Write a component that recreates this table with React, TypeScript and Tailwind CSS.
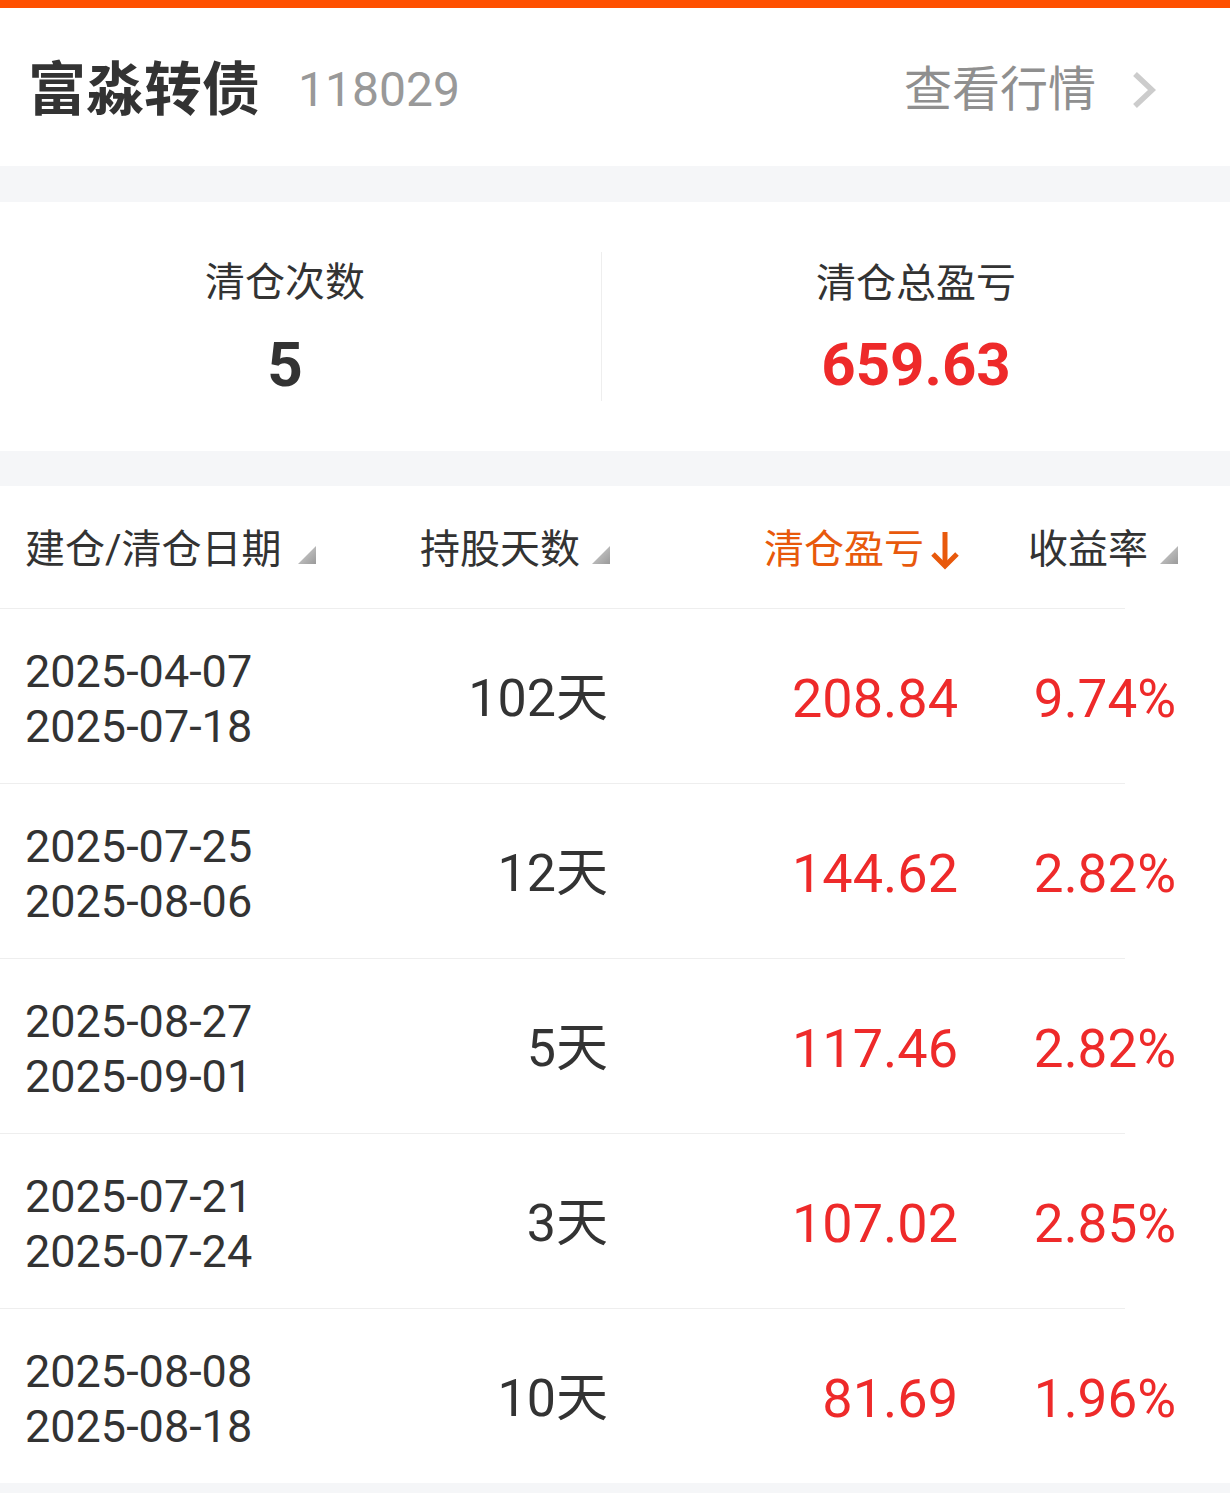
import React from "react";

const FONT = { fontFamily: 'Roboto, "Noto Sans CJK SC", sans-serif' };

function Tri() {
  return (
    <svg width="18" height="18" viewBox="0 0 18 18" className="shrink-0">
      <defs>
        <linearGradient id="tg" x1="0" y1="0" x2="1" y2="1">
          <stop offset="0" stopColor="#d6d6d6" />
          <stop offset="1" stopColor="#9a9a9a" />
        </linearGradient>
      </defs>
      <polygon points="18,0 18,18 0,18" fill="url(#tg)" />
    </svg>
  );
}

function DownArrow() {
  return (
    <svg width="30" height="40" viewBox="0 0 30 40" className="shrink-0">
      <path d="M15 2 V36" stroke="#e8590c" strokeWidth="5" fill="none" />
      <path d="M3 24 L15 36 L27 24" stroke="#e8590c" strokeWidth="5" fill="none" strokeLinejoin="miter" />
    </svg>
  );
}

const rows = [
  { a: "2025-04-07", b: "2025-07-18", d: "102天", p: "208.84", r: "9.74%" },
  { a: "2025-07-25", b: "2025-08-06", d: "12天", p: "144.62", r: "2.82%" },
  { a: "2025-08-27", b: "2025-09-01", d: "5天", p: "117.46", r: "2.82%" },
  { a: "2025-07-21", b: "2025-07-24", d: "3天", p: "107.02", r: "2.85%" },
  { a: "2025-08-08", b: "2025-08-18", d: "10天", p: "81.69", r: "1.96%" },
];

export default function App() {
  return (
    <div className="w-[1230px] h-[1494px] bg-white overflow-hidden" style={FONT}>
      <div className="h-[8px] bg-[#ff5000]" />
      {/* header */}
      <div className="h-[158px] flex items-center pl-[28px] pr-[72px] pt-[6px]">
        <div className="text-[58px] font-bold text-[#333333] leading-none">富淼转债</div>
        <div className="ml-[38px] text-[48px] text-[#999999] leading-none">118029</div>
        <div className="ml-auto flex items-center">
          <span className="text-[48px] text-[#8f8f8f] leading-none">查看行情</span>
          <svg width="28" height="40" viewBox="0 0 28 40" className="ml-[34px]">
            <path d="M5 4 L22 20 L5 36" stroke="#cccccc" strokeWidth="5.5" fill="none" />
          </svg>
        </div>
      </div>
      <div className="h-[36px] bg-[#f5f6f8]" />
      {/* stats */}
      <div className="h-[249px] flex items-center">
        <div className="w-[570px] flex flex-col items-center pt-[6px]">
          <div className="text-[40px] text-[#333333] leading-none">清仓次数</div>
          <div className="mt-[31px] text-[62px] font-bold text-[#333333] leading-none">5</div>
        </div>
        <div className="ml-[31px] w-px h-[149px] bg-[#eeeeee]" />
        <div className="flex-1 flex flex-col items-center pt-[6px]">
          <div className="text-[40px] text-[#333333] leading-none">清仓总盈亏</div>
          <div className="mt-[31px] text-[60px] font-bold text-[#ee2a2a] leading-none">659.63</div>
        </div>
      </div>
      <div className="h-[35px] bg-[#f5f6f8]" />
      {/* table header */}
      <div className="h-[122px] flex items-center pt-[6px] text-[40px] text-[#333333] leading-none">
        <div className="w-[360px] pl-[25px] flex items-end gap-[16px]">
          <span>建仓/清仓日期</span>
          <span className="mb-[6px]"><Tri /></span>
        </div>
        <div className="w-[250px] flex items-end justify-end gap-[12px]">
          <span>持股天数</span>
          <span className="mb-[6px]"><Tri /></span>
        </div>
        <div className="w-[350px] flex items-center justify-end gap-[6px] text-[#e8590c]">
          <span>清仓盈亏</span>
          <DownArrow />
        </div>
        <div className="w-[218px] flex items-end justify-end gap-[12px]">
          <span>收益率</span>
          <span className="mb-[6px]"><Tri /></span>
        </div>
      </div>
      {rows.map((row, i) => (
        <div key={i}>
          <div className="w-[1125px] h-px bg-[#eeeeee]" />
          <div className="h-[174px] flex items-center pt-[6px] leading-none">
            <div className="w-[360px] pl-[25px] flex flex-col gap-[10px] text-[45px] text-[#333333]">
              <span>{row.a}</span>
              <span>{row.b}</span>
            </div>
            <div className="w-[248px] text-right text-[52px] text-[#333333]">{row.d}</div>
            <div className="w-[350px] text-right text-[54px] text-[#ee2a2a]">{row.p}</div>
            <div className="w-[218px] text-right text-[53px] text-[#ee2a2a]">{row.r}</div>
          </div>
        </div>
      ))}
      <div className="h-[10px] bg-[#f5f6f8]" />
    </div>
  );
}
